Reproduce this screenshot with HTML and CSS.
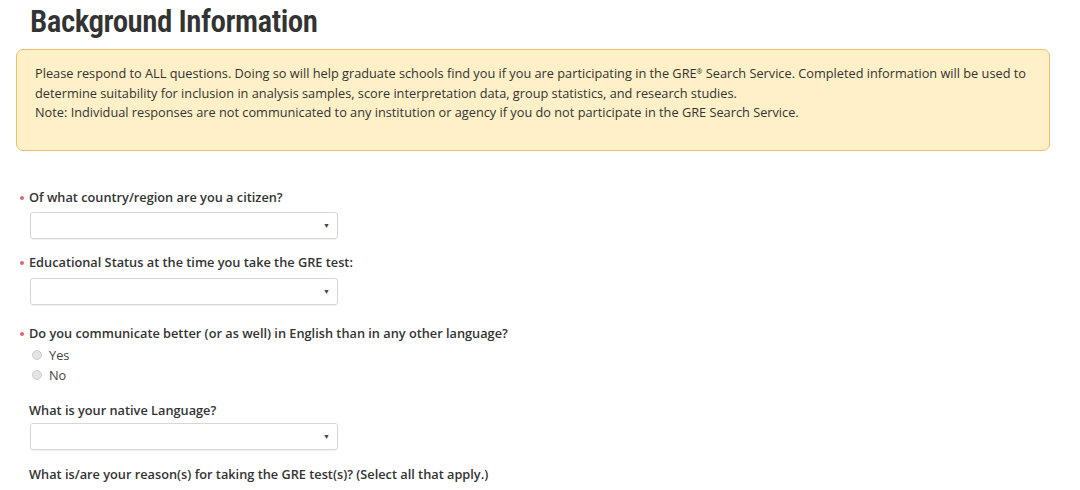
FILE: index.html
```html
<!DOCTYPE html>
<html lang="en">
<head>
<meta charset="utf-8">
<title>Background Information</title>
<link rel="stylesheet" href="styles.css">
</head>
<body>
<main class="page">
  <h1 class="title">Background Information</h1>
  <div class="notice">
    <p>Please respond to ALL questions. Doing so will help graduate schools find you if you are participating in the GRE<span class="reg">®</span> Search Service. Completed information will be used to determine suitability for inclusion in analysis samples, score interpretation data, group statistics, and research studies.</p>
    <p>Note: Individual responses are not communicated to any institution or agency if you do not participate in the GRE Search Service.</p>
  </div>

  <form class="form">
    <div class="field f1">
      <label class="label req">Of what country/region are you a citizen?</label>
      <div class="select"><span class="arrow">▼</span></div>
    </div>
    <div class="field f2">
      <label class="label req">Educational Status at the time you take the GRE test:</label>
      <div class="select"><span class="arrow">▼</span></div>
    </div>
    <div class="field f3">
      <label class="label req">Do you communicate better (or as well) in English than in any other language?</label>
      <div class="radios">
        <div class="radio"><span class="dot"></span>Yes</div>
        <div class="radio"><span class="dot"></span>No</div>
      </div>
    </div>
    <div class="field f4">
      <label class="label">What is your native Language?</label>
      <div class="select"><span class="arrow">▼</span></div>
    </div>
    <div class="field f5">
      <label class="label">What is/are your reason(s) for taking the GRE test(s)? (Select all that apply.)</label>
    </div>
  </form>
</main>
</body>
</html>
```

FILE: styles.css
```css
html, body {
  margin: 0;
  padding: 0;
  background: #ffffff;
}
body {
  font-family: "Open Sans", "Lato", sans-serif;
  color: #333333;
  font-size: 12px;
}
.page {
  padding: 0 30px 0 16px;
}
.title {
  margin: 0;
  padding: 3px 0 0 14px;
  height: 49px;
  box-sizing: border-box;
  font-family: "Roboto Condensed", "Open Sans Condensed", "Open Sans", sans-serif;
  font-stretch: 75%;
  font-weight: 600;
  font-size: 31px;
  line-height: 38px;
  color: #333333;
  letter-spacing: -0.5px;
}
.notice {
  box-sizing: border-box;
  width: 1034px;
  height: 102px;
  background: #fff0c7;
  border: 1px solid #f1bf6b;
  border-radius: 7px;
  padding: 14px 18px 10px;
  line-height: 19.5px;
  font-size: 12.75px;
  color: #333;
}
.notice p { margin: 0; }
.reg {
  font-size: 7px;
  line-height: 1;
  position: relative;
  top: -4px;
}
.form {
  padding: 38px 0 0 0;
}
.label {
  display: block;
  font-weight: 600;
  font-size: 12.75px;
  line-height: 16px;
  padding-left: 13px;
  position: relative;
  color: #333;
}
.label.req::before {
  content: "";
  position: absolute;
  left: 4px;
  top: 7px;
  width: 4px;
  height: 4px;
  border-radius: 50%;
  background: #d9657c;
}
.select {
  box-sizing: border-box;
  margin: 7px 0 0 14px;
  width: 308px;
  height: 27px;
  border: 1px solid #d6d6d6;
  border-radius: 3px;
  display: flex;
  align-items: center;
  justify-content: flex-end;
  padding-right: 7px;
  box-shadow: 0 1px 1px rgba(0,0,0,0.06);
}
.arrow {
  font-size: 7px;
  color: #444;
}
.f1 { margin-bottom: 15px; }
.f2 .select { margin-top: 8px; }
.f2 { margin-bottom: 20px; }
.f3 { margin-bottom: 17px; }
.f4 .select { margin-top: 5px; }
.f4 { margin-bottom: 16px; }
.radios {
  padding: 4px 0 0 14px;
}
.radio {
  display: flex;
  align-items: center;
  height: 20px;
  font-size: 12.75px;
  color: #444;
}
.dot {
  box-sizing: border-box;
  width: 10px;
  height: 10px;
  border-radius: 50%;
  border: 1px solid #cfcfcf;
  background: #e4e4e4;
  margin: 0 7px 0 2px;
}
```
